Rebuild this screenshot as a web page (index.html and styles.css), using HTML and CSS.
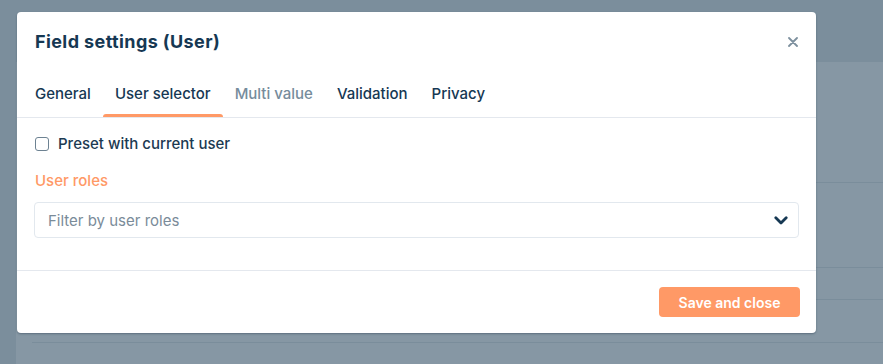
FILE: index.html
```html
<!DOCTYPE html>
<html lang="en">
<head>
    <meta charset="UTF-8">
    <meta name="viewport" content="width=device-width, initial-scale=1.0">
    <title>Field settings</title>
    <link rel="stylesheet" href="styles.css">
</head>
<body>
    <div class="page">
        <div class="sidebar"></div>
        <div class="main">
            <div class="topbar"></div>
            <div class="row row-tall"></div>
            <div class="row row-mid"></div>
            <div class="row row-short"></div>
            <div class="row row-base"></div>
            <div class="row row-last"></div>
        </div>
    </div>

    <div class="modal">
        <div class="modal-header">
            <h2 class="modal-title">Field settings (User)</h2>
            <button class="close-btn" aria-label="Close">
                <svg width="10" height="10" viewBox="0 0 10 10">
                    <path d="M1 1 L9 9 M9 1 L1 9" stroke="#7d909e" stroke-width="1.8" stroke-linecap="round"/>
                </svg>
            </button>
        </div>

        <div class="tabs">
            <div class="tab">General</div>
            <div class="tab active">User selector</div>
            <div class="tab disabled">Multi value</div>
            <div class="tab">Validation</div>
            <div class="tab">Privacy</div>
        </div>

        <div class="modal-body">
            <label class="check-row">
                <span class="checkbox"></span>
                Preset with current user
            </label>

            <div class="field-label">User roles</div>
            <div class="select">
                <span class="placeholder">Filter by user roles</span>
                <svg class="chevron" width="14" height="9" viewBox="0 0 14 9">
                    <path d="M1.8 1.8 L7 7 L12.2 1.8" fill="none" stroke="#163853" stroke-width="2.8" stroke-linecap="round" stroke-linejoin="round"/>
                </svg>
            </div>
        </div>

        <div class="modal-footer">
            <button class="save-btn">Save and close</button>
        </div>
    </div>
</body>
</html>
```

FILE: styles.css
```css
body {
    margin: 0;
    padding: 0;
    font-family: Inter, "Noto Sans", sans-serif;
    overflow: hidden;
    background-color: #8697a4;
}

.page {
    display: flex;
    height: 364px;
}

.sidebar {
    width: 16px;
    background-color: #7b8e9c;
}

.main {
    flex: 1;
    display: flex;
    flex-direction: column;
}

.topbar {
    height: 62px;
    background-color: #7b8e9c;
}

.row {
    margin-left: 16px;
    border-bottom: 1px solid #7a8d9b;
}

.row-tall { height: 120px; }
.row-mid { height: 84px; }
.row-short { height: 31px; }
.row-base { height: 42px; }
.row-last { flex: 1; border-bottom: none; }

.modal {
    position: absolute;
    top: 12px;
    left: 17px;
    width: 799px;
    height: 321px;
    background-color: #fff;
    border-radius: 4px;
    box-shadow: 0 1px 2px rgba(40, 60, 80, 0.45);
    display: flex;
    flex-direction: column;
}

.modal-header {
    display: flex;
    justify-content: space-between;
    align-items: center;
    padding: 18px 18px 0 18px;
}

.modal-title {
    margin: 0;
    font-size: 18px;
    line-height: 24px;
    font-weight: 700;
    color: #163853;
    letter-spacing: 0.4px;
}

.close-btn {
    background: none;
    border: none;
    padding: 0;
    width: 10px;
    height: 10px;
    display: flex;
    cursor: pointer;
}

.tabs {
    display: flex;
    margin-top: 18px;
    padding-left: 6px;
    border-bottom: 1px solid #e4e8ee;
}

.tab {
    position: relative;
    padding: 12px 12px 13px;
    font-size: 15px;
    line-height: 20px;
    font-weight: 500;
    color: #163853;
}

.tab.disabled {
    color: #768c9c;
}

.tab.active::after {
    content: "";
    position: absolute;
    left: 0;
    right: 0;
    bottom: 0;
    height: 3px;
    background-color: #ff9966;
    border-radius: 3px 3px 0 0;
}

.modal-body {
    padding: 15px 17px 32px;
    border-bottom: 1px solid #e4e8ee;
}

.check-row {
    display: flex;
    align-items: center;
    gap: 9px;
    padding-left: 1px;
    font-size: 15px;
    line-height: 22px;
    font-weight: 500;
    color: #1c3a52;
}

.checkbox {
    flex-shrink: 0;
    box-sizing: border-box;
    width: 14px;
    height: 14px;
    border: 1.5px solid #6d8292;
    border-radius: 3px;
}

.field-label {
    margin-top: 15px;
    font-size: 15px;
    line-height: 22px;
    font-weight: 500;
    color: #ff9966;
    padding-left: 1px;
}

.select {
    margin-top: 10px;
    height: 34px;
    border: 1px solid #e2e8ee;
    border-radius: 4px;
    display: flex;
    align-items: center;
    justify-content: space-between;
    padding: 0 10px 0 13px;
}

.placeholder {
    font-size: 15px;
    color: #7a8b99;
}

.modal-footer {
    flex: 1;
    display: flex;
    justify-content: flex-end;
    align-items: flex-start;
    padding: 16px 16px 0;
}

.save-btn {
    height: 30px;
    width: 141px;
    background-color: #ff9966;
    color: #fff;
    border: none;
    border-radius: 4px;
    font-family: Inter, "Noto Sans", sans-serif;
    font-size: 14px;
    font-weight: 600;
    cursor: pointer;
}
```
